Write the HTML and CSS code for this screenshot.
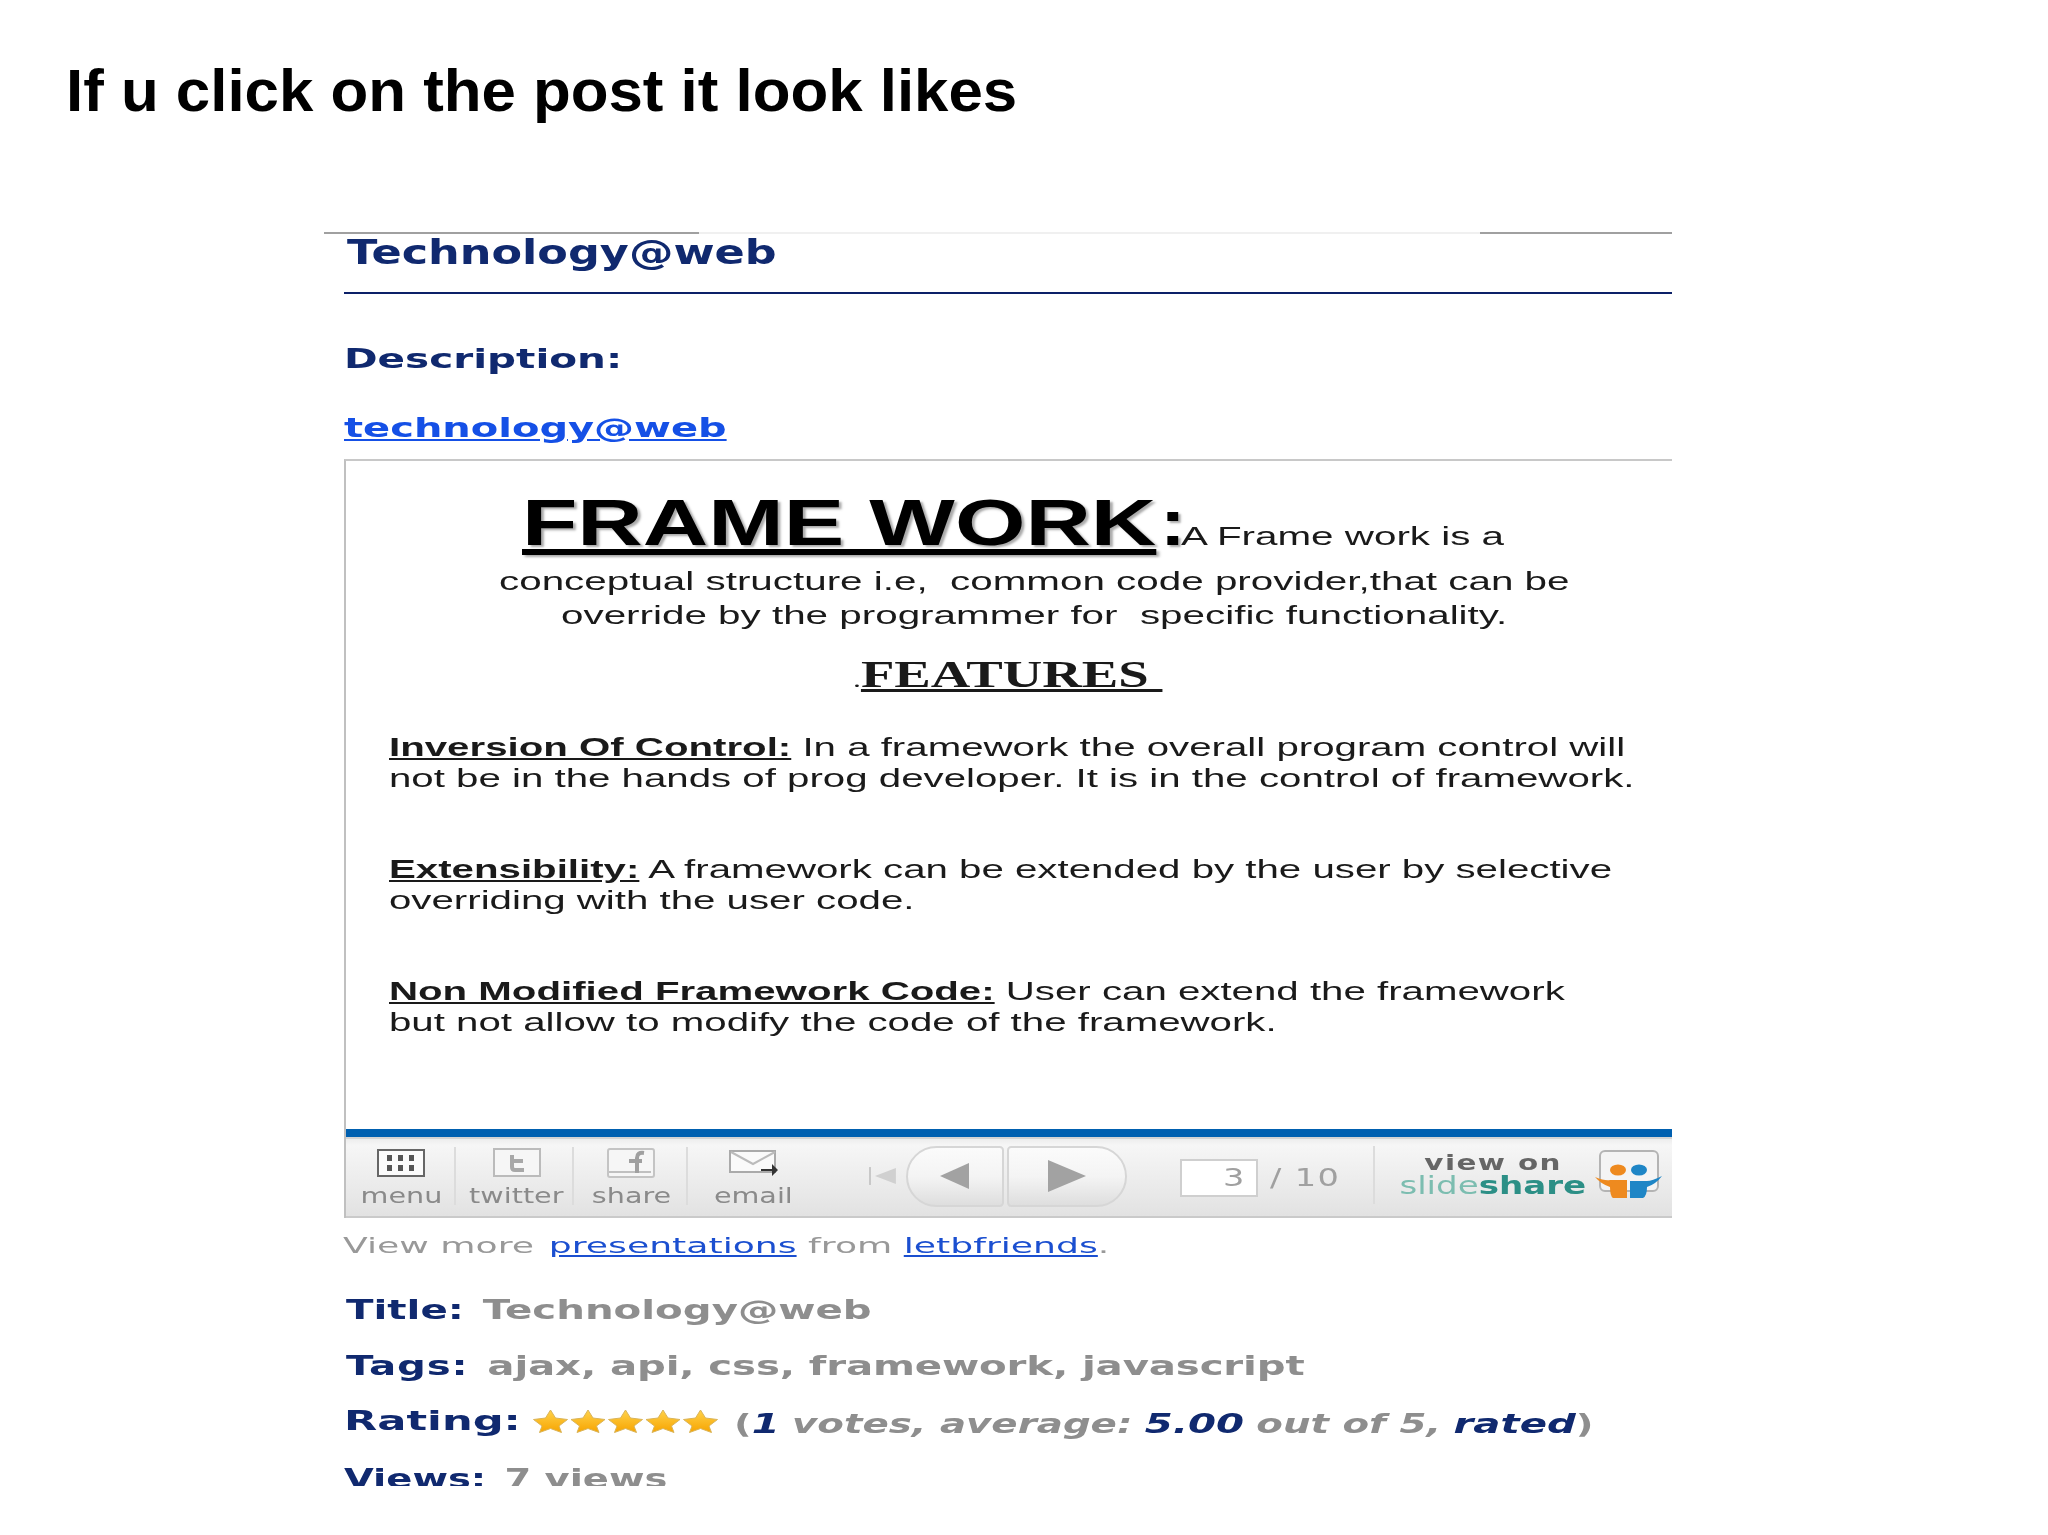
FILE: index.html
```html
<!DOCTYPE html>
<html lang="en">
<head>
<meta charset="utf-8">
<title>If u click on the post it look likes</title>
<link rel="stylesheet" href="styles.css">
</head>
<body>
<h1 class="headline"><span class="st sx-head">If u click on the post it look likes</span></h1>
<main class="shot">
  <div class="top-edge"><i class="edge-a"></i><i class="edge-b"></i><i class="edge-c"></i></div>
  <h2 class="post-title"><span class="st sx-title">Technology@web</span></h2>
  <p class="desc"><b class="st sx-desc">Description:</b></p>
  <p class="desc-link"><a href="#" class="st sx-link">technology@web</a></p>

  <section class="frame">
    <div class="slide">
      <div class="fw-line">
        <span class="fw-box"><b class="st sx-fw fw-text"><u>FRAME WORK</u></b></span>
        <span class="fw-colon"><b class="st sx-colon fw-text">:</b></span>
        <span class="st sx-body sl-text">A Frame work is a</span>
      </div>
      <p class="sl-line l2"><span class="st sx-body">conceptual structure i.e,  common code provider,that can be</span></p>
      <p class="sl-line l3"><span class="st sx-body">override by the programmer for  specific functionality.</span></p>
      <p class="features"><b class="st sx-feat"><span class="dot">.</span><u>FEATURES </u></b></p>

      <p class="para first"><span class="st sx-para"><b><u>Inversion Of Control:</u></b> In a framework the overall program control will</span></p>
      <p class="para"><span class="st sx-para">not be in the hands of prog developer. It is in the control of framework.</span></p>
      <p class="para gap-a"><span class="st sx-para"><b><u>Extensibility:</u></b> A framework can be extended by the user by selective</span></p>
      <p class="para"><span class="st sx-para">overriding with the user code.</span></p>
      <p class="para gap-b"><span class="st sx-para"><b><u>Non Modified Framework Code:</u></b> User can extend the framework</span></p>
      <p class="para"><span class="st sx-para">but not allow to modify the code of the framework.</span></p>
    </div>

    <div class="bluebar"></div>
    <div class="toolbar">
      <div class="tool t-menu">
        <svg class="ic" width="48" height="30" viewBox="0 0 48 30"><rect x="1" y="2" width="46" height="26" fill="#fbfbfb" stroke="#666" stroke-width="2"/><g fill="#555"><rect x="10" y="7" width="5" height="6"/><rect x="21" y="7" width="5" height="6"/><rect x="32" y="7" width="5" height="6"/><rect x="10" y="17" width="5" height="6"/><rect x="21" y="17" width="5" height="6"/><rect x="32" y="17" width="5" height="6"/></g></svg>
        <span class="lbl">menu</span>
      </div>
      <div class="tool t-twitter">
        <svg class="ic" width="48" height="30" viewBox="0 0 48 30"><rect x="1" y="1" width="46" height="27" fill="#f6f6f6" stroke="#bbb" stroke-width="2"/><path d="M19 7v12q0 3 3 3h9M19 13h11" fill="none" stroke="#a8a8a8" stroke-width="4"/></svg>
        <span class="lbl">twitter</span>
      </div>
      <div class="tool t-share">
        <svg class="ic" width="48" height="30" viewBox="0 0 48 30"><rect x="1" y="1" width="46" height="28" rx="2" fill="#f6f6f6" stroke="#c4c4c4" stroke-width="2"/><path d="M2 24h42" stroke="#c0c0c0" stroke-width="2"/><path d="M37 5q-7-1-7 5v15M22 13h13" fill="none" stroke="#a0a0a0" stroke-width="4"/></svg>
        <span class="lbl">share</span>
      </div>
      <div class="tool t-email">
        <svg class="ic" width="50" height="30" viewBox="0 0 50 30"><path d="M1 3h45v21H1z" fill="#fafafa" stroke="#aaa" stroke-width="2"/><path d="M2 4l22 12L46 4" fill="none" stroke="#bbb" stroke-width="2"/><path d="M32 21h11v-5l6 6-6 6v-5H32z" fill="#333"/></svg>
        <span class="lbl">email</span>
      </div>
      <div class="nav">
        <svg class="first" width="30" height="20" viewBox="0 0 30 20"><path d="M1 1h2v18H1z" fill="#c8c8c8"/><path d="M7 10l21-8v16z" fill="#d0d0d0"/></svg>
        <button class="pill prev" type="button" aria-label="previous"><svg width="30" height="26" viewBox="0 0 30 26"><path d="M0 13L29 0v26z" fill="#a2a2a2"/></svg></button>
        <button class="pill next" type="button" aria-label="next"><svg width="38" height="32" viewBox="0 0 38 32"><path d="M0 0l38 16L0 32z" fill="#a2a2a2"/></svg></button>
      </div>
      <div class="pager">
        <span class="page-box"><span class="st sx-num">3</span></span>
        <span class="st sx-num page-total">/ 10</span>
      </div>
      <div class="brand">
        <div class="brand-text">
          <span class="view-on">view on</span>
          <span class="ss"><span class="ss-a">slide</span><b>share</b></span>
        </div>
        <svg class="ss-logo" width="68" height="50" viewBox="0 0 68 50">
          <rect x="5" y="1" width="58" height="40" rx="5" fill="#f4f4f4" stroke="#b4b4b4" stroke-width="2"/>
          <ellipse cx="23" cy="20" rx="8" ry="5.5" fill="#ee8a1f"/>
          <ellipse cx="44" cy="20" rx="8" ry="5.5" fill="#1f86c6"/>
          <path d="M0 27q10 4 15 3h17v18H18q-3-2-3-11Q6 34 0 27z" fill="#ee8a1f"/>
          <path d="M67 26q-10 5-15 5H35v17h13q4-2 4-11 9-3 15-11z" fill="#1f86c6"/>
        </svg>
      </div>
    </div>
  </section>

  <p class="more"><span class="st sx-more">View more <a class="first-link" href="#">presentations</a> from <a href="#">letbfriends</a>.</span></p>

  <p class="meta m-title"><span class="st sx-meta"><b class="k">Title:</b> <b class="v">Technology@web</b></span></p>
  <p class="meta m-tags"><span class="st sx-tags"><b class="k">Tags:</b> <b class="v">ajax, api, css, framework, javascript</b></span></p>
  <div class="meta m-rating">
    <span class="r-key"><b class="st sx-rate k">Rating:</b></span>
    <svg class="stars" width="187" height="24" viewBox="0 0 187 24" aria-label="5 stars">
      <defs>
        <linearGradient id="gold" x1="0" y1="0" x2="0" y2="1"><stop offset="0" stop-color="#ffd24a"/><stop offset="1" stop-color="#f7a400"/></linearGradient>
        <path id="star" d="M18.5 1l5 8 12 1.500-8.500 6.500 2.500 6.500-11-4-11 4 2.500-6.500L1.500 10.500l12-1.500z" fill="url(#gold)" stroke="#d9b45a" stroke-width="1"/>
      </defs>
      <use href="#star"/><use href="#star" x="37.500"/><use href="#star" x="75"/><use href="#star" x="112.500"/><use href="#star" x="150"/>
    </svg>
    <span class="r-text"><span class="st sx-rtext"><span class="v paren">(</span><b class="k it">1</b> <i class="v iv">votes, average:</i> <b class="k it">5.00</b> <i class="v iv">out of 5,</i> <b class="k it">rated</b><span class="v paren">)</span></span></span>
  </div>
  <p class="meta m-views"><span class="st sx-views"><b class="k">Views:</b> <b class="v">7 views</b></span></p>
</main>
</body>
</html>
```

FILE: styles.css
```css
* { box-sizing: border-box; }
html, body { margin: 0; padding: 0; background: #fff; }
body { width: 2048px; height: 1535px; overflow: hidden; font-family: "Liberation Sans", Arial, sans-serif; }
p, h1, h2 { margin: 0; font-weight: normal; }

.headline {
  margin: 56px 0 0 66px;
  font: bold 60px/70px "Liberation Sans", Arial, sans-serif;
  color: #000;
  height: 70px;
  filter: blur(0.3px);
}

.shot {
  margin: 106px 0 0 324px;
  width: 1348px;
  height: 1254px;
  overflow: hidden;
  font-family: "DejaVu Sans", sans-serif;
  filter: blur(0.6px);
}

/* stretched text: the source picture was widened, so each line is scaled from its left edge */
.st { display: inline-block; white-space: pre; transform-origin: 0 50%; }
.sx-head { transform: scaleX(1.03); }
.sx-title { transform: scaleX(1.31); }
.sx-desc { transform: scaleX(1.5); }
.sx-link { transform: scaleX(1.48); }
.sx-fw { transform: scaleX(1.416); }
.sx-colon { transform: scaleX(1.2); }
.sx-body { transform: scaleX(1.615); }
.sx-feat { transform: scaleX(1.44); }
.sx-para { transform: scaleX(1.609); }
.sx-more { transform: scaleX(1.644); }
.sx-meta { transform: scaleX(1.55); }
.sx-tags { transform: scaleX(1.55); }
.sx-rate { transform: scaleX(1.6); }
.sx-rtext { transform: scaleX(1.49); }
.sx-views { transform: scaleX(1.48); }
.sx-num { transform: scaleX(1.4); }

.top-edge { display: flex; height: 2px; }
.top-edge i { display: block; height: 2px; }
.edge-a { width: 375px; background: #a0a0a0; }
.edge-b { width: 781px; background: #f0f0f0; }
.edge-c { width: 192px; background: #a0a0a0; }

.post-title {
  margin-left: 20px;
  height: 60px;
  border-bottom: 2px solid #0c2068;
  font: bold 34px/36px "DejaVu Sans", sans-serif;
  color: #10296f;
  padding-left: 3px;
}
.desc, .desc-link { margin-left: 20px; font: bold 27px/36px "DejaVu Sans", sans-serif; }
.desc { margin-top: 47px; color: #10296f; }
.desc-link { margin-top: 33px; }
.desc-link a { color: #1550e6; text-decoration: underline; }

.frame {
  margin: 13px 0 0 20px;
  width: 1328px;
  border-top: 2px solid #c8c8c8;
  border-left: 2px solid #c0c0c0;
}
.slide { height: 668px; color: #1a1a1a; overflow: hidden; font-family: "Liberation Sans", Arial, sans-serif; filter: blur(0.5px); }
.fw-line { display: flex; align-items: baseline; margin: 27px 0 0 176px; height: 70px; line-height: 70px; }
.fw-text { font-size: 64px; color: #000; text-shadow: 2px 2px 2px #aaa; }
.fw-box { flex: 0 0 638px; }
.fw-colon { flex: 0 0 20px; }
.sl-text { font-size: 25px; }
.sl-line { font-size: 25px; line-height: 33px; height: 33px; }
.l2 { margin: 7px 0 0 153px; }
.l3 { margin: 1px 0 0 215px; }
.features {
  margin: 22px 0 0 507px;
  font: bold 38px/40px "Liberation Serif", serif;
  height: 40px;
}
.dot { font-size: 22px; font-weight: normal; }
.para { margin-left: 43px; font-size: 25px; line-height: 31px; height: 31px; }
.para.first { margin-top: 38px; }
.gap-a { margin-top: 60px; }
.gap-b { margin-top: 60px; }

.bluebar { height: 8px; background: #0060b0; }
.toolbar {
  display: flex;
  align-items: flex-start;
  height: 81px;
  background: linear-gradient(#ededed 0, #f6f6f6 6px, #ececec 55%, #e2e2e2 100%);
  border-top: 2px solid #d4d4d4;
  border-bottom: 2px solid #cacaca;
  color: #8a8a8a;
}
.tool {
  display: flex;
  flex-direction: column;
  align-items: center;
  height: 58px;
  margin-top: 8px;
  border-right: 2px solid #dcdcdc;
}
.t-menu { width: 110px; padding-left: 3px; }
.t-twitter { width: 119px; padding-left: 6px; }
.t-share { width: 114px; padding-left: 3px; }
.t-email { width: 130px; border-right: 0; padding-left: 3px; }
.ic { flex: none; margin-top: 1px; }
.lbl {
  display: block;
  font-size: 22px;
  line-height: 26px;
  margin-top: 5px;
  transform: scaleX(1.3);
}
.nav { display: flex; align-items: center; height: 62px; margin: 6px 0 0 51px; width: 259px; }
.first { margin-right: 8px; }
.pill {
  height: 61px;
  padding: 0;
  display: flex;
  align-items: center;
  justify-content: center;
  background: linear-gradient(#fbfbfb, #f4f4f4 50%, #dedede);
  border: 2px solid #d6d6d6;
}
.prev { width: 99px; border-radius: 44px 6px 6px 44px; }
.next { width: 120px; margin-left: 3px; border-radius: 6px 44px 44px 6px; }
.pager { display: flex; align-items: center; height: 38px; margin: 20px 0 0 53px; font-size: 24px; color: #a0a0a0; }
.page-box {
  display: flex;
  justify-content: flex-end;
  width: 78px;
  height: 38px;
  line-height: 34px;
  padding-right: 18px;
  background: #fff;
  border: 2px solid #cfcfcf;
}
.page-total { margin-left: 12px; letter-spacing: 1px; }
.brand { display: flex; align-items: flex-start; margin: 7px 0 0 53px; height: 58px; border-left: 2px solid #dcdcdc; width: 300px; padding-left: 33px; }
.brand-text { display: flex; flex-direction: column; align-items: center; width: 170px; margin-top: 7px; }
.view-on { font: bold 21px/20px "DejaVu Sans", sans-serif; color: #666; letter-spacing: 1px; transform: scaleX(1.4); }
.ss { font: 24px/26px "DejaVu Sans", sans-serif; color: #7cbdb0; transform: scaleX(1.42); white-space: nowrap; }
.ss b { color: #2c8f86; }
.ss-logo { flex: none; margin: 4px 0 0 17px; }

.more { margin: 13px 0 0 19px; font-size: 22px; line-height: 30px; color: #999; }
.more a { color: #1b4fd0; text-decoration: underline; }
.first-link { margin-left: 2px; }
.meta { margin-left: 22px; font-size: 26px; line-height: 36px; height: 36px; }
.k { color: #10296f; font-weight: bold; }
.v { color: #8e8e8e; font-weight: bold; margin-left: 4px; }
.paren, .iv { margin-left: 0; }
.it { font-style: italic; font-size: 27px; }
.m-title { margin-top: 31px; }
.m-tags { margin-top: 20px; }
.m-tags .k { letter-spacing: 0.5px; }
.m-tags .v { letter-spacing: -0.1px; }
.m-rating { display: flex; align-items: baseline; margin-top: 19px; margin-left: 20px; }
.r-key { flex: 0 0 188px; font-size: 27px; }
.stars { flex: none; align-self: flex-start; margin: 6px 15px 0 0; }
.r-text { position: relative; top: 3px; }
.m-views { margin-top: 22px; margin-left: 20px; }
```
